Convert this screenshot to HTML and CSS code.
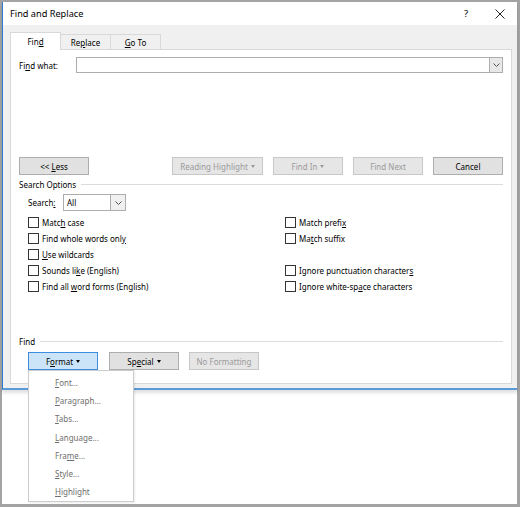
FILE: index.html
```html
<!DOCTYPE html>
<html lang="en">
<head>
  <meta charset="UTF-8" />
  <title>Find and Replace</title>
  <link rel="stylesheet" href="styles.css">
</head>
<body>
  <div class="screen">
    <div class="dialog">
      <div class="titlebar">
        <span class="title">Find and Replace</span>
        <span class="help">?</span>
        <svg class="close" width="10" height="10" viewBox="0 0 10 10">
          <path d="M0.5 0.5 L9.5 9.5 M9.5 0.5 L0.5 9.5" stroke="#222" stroke-width="1" fill="none"/>
        </svg>
      </div>

      <div class="body">
        <div class="tabs">
          <div class="tab active"><span>Fin<u>d</u></span></div>
          <div class="tab"><span>Re<u>p</u>lace</span></div>
          <div class="tab"><span><u>G</u>o To</span></div>
        </div>

        <div class="panel">
          <div class="find-row">
            <label>Fi<u>n</u>d what:</label>
            <div class="combo">
              <span class="combo-text"></span>
              <span class="combo-arrow">
                <svg width="7" height="4" viewBox="0 0 7 4"><path d="M0.5 0.5 L3.5 3.5 L6.5 0.5" stroke="#555" fill="none"/></svg>
              </span>
            </div>
          </div>

          <div class="button-row">
            <button class="btn"><span>&lt;&lt; <u>L</u>ess</span></button>
            <button class="btn disabled wide push"><span>Reading Highlight</span> <span class="caret"></span></button>
            <button class="btn disabled"><span>Find In</span> <span class="caret"></span></button>
            <button class="btn disabled"><span>Find Next</span></button>
            <button class="btn"><span>Cancel</span></button>
          </div>

          <div class="group-label"><span>Search Options</span></div>

          <div class="search-row">
            <label>Search<u>:</u></label>
            <div class="combo small">
              <span class="combo-text">All</span>
              <span class="combo-arrow">
                <svg width="7" height="4" viewBox="0 0 7 4"><path d="M0.5 0.5 L3.5 3.5 L6.5 0.5" stroke="#555" fill="none"/></svg>
              </span>
            </div>
          </div>

          <div class="options">
            <div class="check"><span class="box"></span><span>Matc<u>h</u> case</span></div>
            <div class="check"><span class="box"></span><span>Match prefi<u>x</u></span></div>
            <div class="check"><span class="box"></span><span>Find whole words onl<u>y</u></span></div>
            <div class="check"><span class="box"></span><span>Ma<u>t</u>ch suffix</span></div>
            <div class="check"><span class="box"></span><span><u>U</u>se wildcards</span></div>
            <div></div>
            <div class="check"><span class="box"></span><span>Sounds li<u>k</u>e (English)</span></div>
            <div class="check"><span class="box"></span><span>Ignore punctuation character<u>s</u></span></div>
            <div class="check"><span class="box"></span><span>Find all <u>w</u>ord forms (English)</span></div>
            <div class="check"><span class="box"></span><span>Ignore white-sp<u>a</u>ce characters</span></div>
          </div>

          <div class="group-label find-label"><span>Find</span></div>

          <div class="format-row">
            <div class="menu-anchor">
              <button class="btn active"><span>F<u>o</u>rmat</span> <span class="caret"></span></button>
              <ul class="menu">
                <li><span><u>F</u>ont...</span></li>
                <li><span><u>P</u>aragraph...</span></li>
                <li><span><u>T</u>abs...</span></li>
                <li><span><u>L</u>anguage...</span></li>
                <li><span>Fra<u>m</u>e...</span></li>
                <li><span><u>S</u>tyle...</span></li>
                <li><span><u>H</u>ighlight</span></li>
              </ul>
            </div>
            <button class="btn"><span>Sp<u>e</u>cial</span> <span class="caret"></span></button>
            <button class="btn disabled"><span>No Formatting</span></button>
          </div>
        </div>
      </div>
    </div>
  </div>
</body>
</html>
```

FILE: styles.css
```css
* {
  box-sizing: border-box;
}

body {
  margin: 0;
  font-family: 'Noto Sans', 'Open Sans', sans-serif;
  font-size: 8px;
  color: #000;
  background: #fff;
}

.screen {
  width: 520px;
  height: 507px;
  border-style: solid;
  border-color: #a3a3a3;
  border-width: 2px 3px 3px 2px;
  background: #fff;
}

.dialog {
  width: 515px;
  border-left: 1px solid #2b7bd3;
  border-bottom: 2px solid #5b9ad8;
  box-shadow: 0 3px 3px rgba(0, 0, 0, 0.12);
}

.titlebar {
  height: 23px;
  background: #fff;
  display: flex;
  align-items: center;
  padding: 0 12px 0 7px;
}

.title {
  font-size: 9.2px;
  flex: 1;
}

.help {
  font-size: 9.5px;
  margin-right: 27px;
}

.body {
  background: #f0f0f0;
  padding: 7px 5px 4px 7px;
}

.tabs {
  display: flex;
  align-items: flex-end;
  height: 17px;
  position: relative;
  z-index: 1;
}

.tab {
  width: 50px;
  height: 15px;
  border: 1px solid #d9d9d9;
  border-bottom: none;
  border-left: none;
  display: flex;
  align-items: center;
  justify-content: center;
  background: #f0f0f0;
}

.tab.active {
  width: 51px;
  height: 18px;
  background: #fff;
  border-left: 1px solid #d9d9d9;
  margin-bottom: -1px;
}

.panel {
  background: #fff;
  border: 1px solid #d9d9d9;
  padding: 7px 8px 13px 8px;
  height: 335px;
}

.find-row {
  display: flex;
  align-items: center;
  height: 16px;
}

.find-row label {
  width: 57px;
}

.combo {
  flex: 1;
  height: 16px;
  border: 1px solid #adadad;
  display: flex;
  align-items: center;
  background: #fff;
}

.combo-text {
  flex: 1;
  padding-left: 3px;
}

.combo-arrow {
  width: 13px;
  height: 100%;
  border-left: 1px solid #adadad;
  background: #e8e8e8;
  display: flex;
  align-items: center;
  justify-content: center;
}

.combo.small {
  flex: none;
  width: 63px;
  height: 17px;
}

.combo.small .combo-arrow {
  width: 15px;
  background: #f0f0f0;
}

.button-row {
  display: flex;
  margin-top: 84px;
  gap: 10px;
}

.btn {
  font: inherit;
  width: 70px;
  height: 18px;
  padding: 0;
  background: #e1e1e1;
  border: 1px solid #adadad;
  color: #000;
  display: flex;
  align-items: center;
  justify-content: center;
  gap: 3px;
}

.btn.wide {
  width: 91px;
}

.btn.push {
  margin-left: auto;
}

.btn.disabled {
  background: #e6e6e6;
  border-color: #c7c7c7;
  color: #9a9a9a;
}

.btn.active {
  background: #cce4f7;
  border-color: #3d8ee0;
}

.caret {
  width: 0;
  height: 0;
  border-left: 2.5px solid transparent;
  border-right: 2.5px solid transparent;
  border-top: 3px solid currentColor;
}

.group-label {
  display: flex;
  align-items: center;
  height: 10px;
  margin-top: 4px;
}

.group-label::after {
  content: "";
  flex: 1;
  height: 1px;
  background: #dcdcdc;
  margin-left: 5px;
}

.search-row {
  display: flex;
  align-items: center;
  margin-top: 5px;
  padding-left: 9px;
}

.search-row label {
  width: 35px;
}

.options {
  display: grid;
  grid-template-columns: 257px 1fr;
  grid-auto-rows: 16px;
  margin-top: 3px;
  padding-left: 9px;
}

.check {
  display: flex;
  align-items: center;
}

.box {
  width: 11px;
  height: 11px;
  border: 1px solid #333;
  margin-right: 3px;
  background: #fff;
}

.find-label {
  margin-top: 42px;
}

.format-row {
  display: flex;
  gap: 11px;
  margin-top: 6px;
  padding-left: 9px;
}

.format-row .btn + .btn {
  margin-left: -1px;
}

.menu-anchor {
  position: relative;
}

.menu {
  position: absolute;
  left: 0;
  top: 18px;
  width: 106px;
  margin: 0;
  padding: 2px 0 0 0;
  list-style: none;
  background: #fff;
  border: 1px solid #cccccc;
  box-shadow: 1px 1px 2px rgba(0, 0, 0, 0.08);
  z-index: 5;
}

.menu li {
  height: 18.3px;
  display: flex;
  align-items: center;
  padding-left: 26px;
  color: #6e6e6e;
}
```
